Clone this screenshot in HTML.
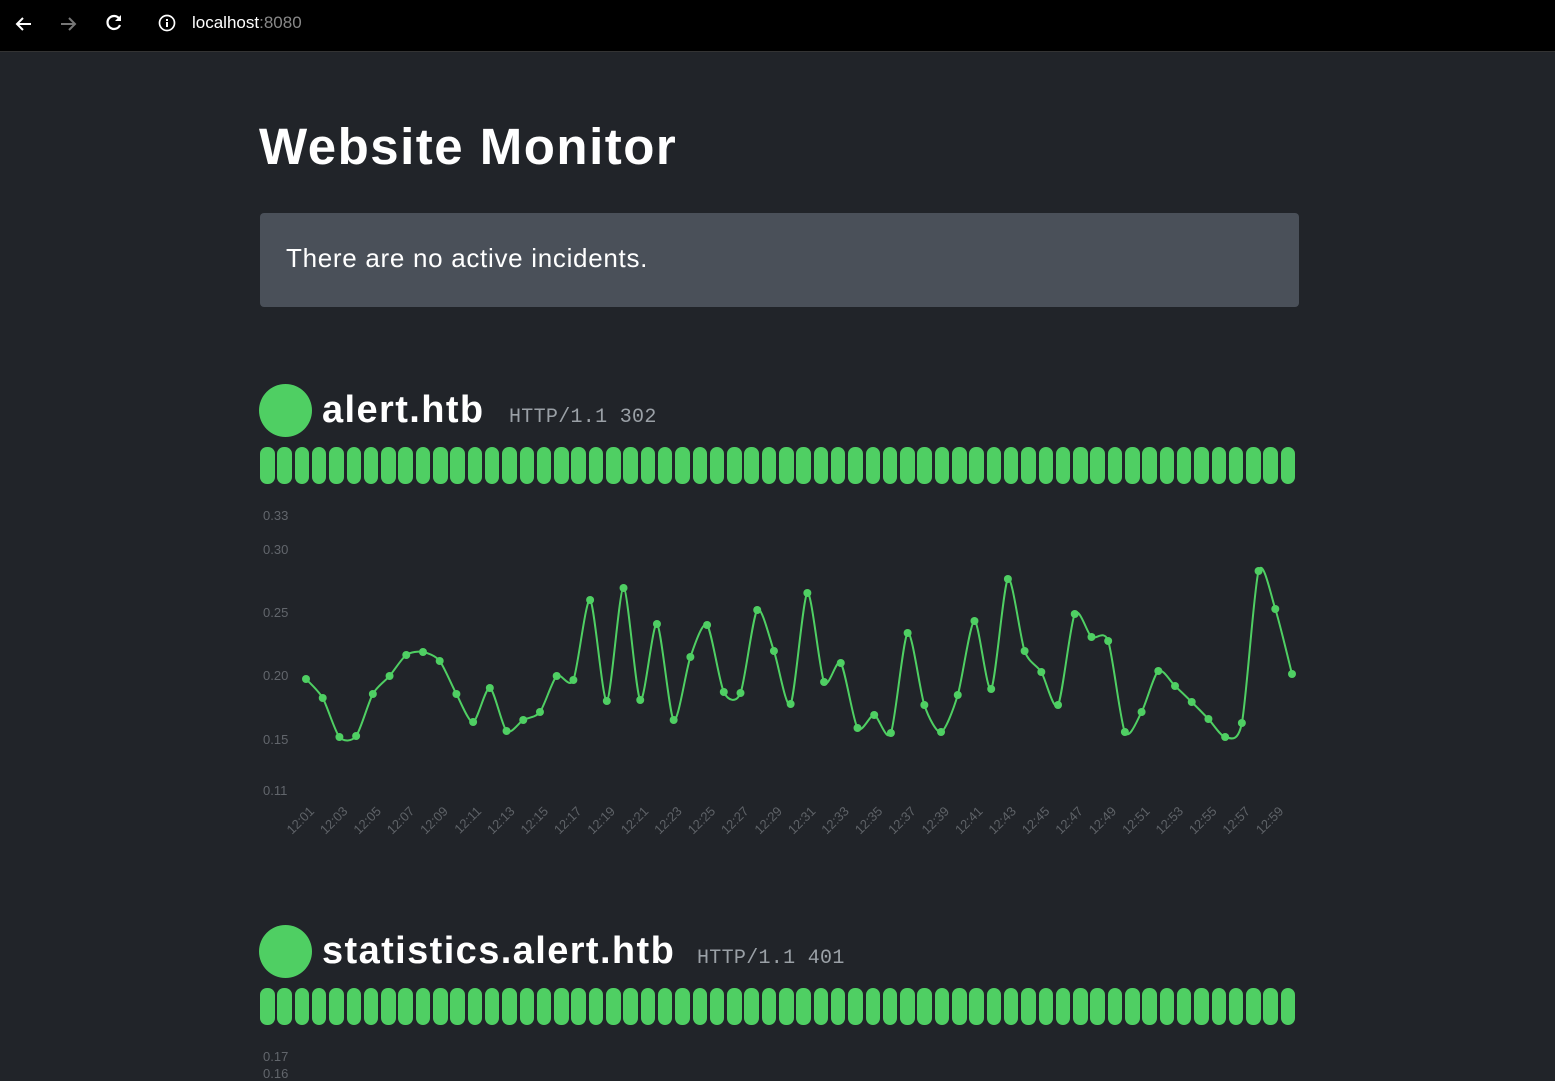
<!DOCTYPE html>
<html><head><meta charset="utf-8"><style>
*{margin:0;padding:0;box-sizing:border-box}
html,body{width:1555px;height:1076px;overflow:hidden;background:#212429;font-family:"Liberation Sans",sans-serif}
#bar{position:absolute;left:0;top:0;width:1555px;height:52px;background:#000;border-bottom:1px solid #333}
.abs{position:absolute}
h1{position:absolute;left:259px;top:117px;font-size:51px;font-weight:bold;color:#fff;letter-spacing:1.5px}
.box{position:absolute;left:260px;top:213px;width:1039px;height:94px;background:#4a5059;border-radius:4px;color:#fff;font-size:26px;padding:30px 0 0 26px;letter-spacing:0.7px}
.dot{position:absolute;width:53px;height:53px;border-radius:50%;background:#4fcf63;left:259px}
.name{position:absolute;left:322px;font-size:38px;font-weight:bold;color:#fff;letter-spacing:1.4px}
.code{position:absolute;font-family:"Liberation Mono",monospace;font-size:20px;color:#9aa0a6;letter-spacing:0.3px}
.ylab{position:absolute;left:263px;font-size:13px;color:#62666c}
</style></head><body>
<div id="bar">
<svg class="abs" style="left:12px;top:12px" width="24" height="24" viewBox="0 0 24 24"><path d="M19 12H5M11 6l-6 6 6 6" stroke="#fff" stroke-width="2" fill="none"/></svg>
<svg class="abs" style="left:56px;top:12px" width="24" height="24" viewBox="0 0 24 24"><path d="M5 12h14M13 6l6 6-6 6" stroke="#777" stroke-width="2" fill="none"/></svg>
<svg class="abs" style="left:102px;top:11px" width="24" height="24" viewBox="0 0 24 24"><path d="M17.5 8A6.5 6.5 0 1 0 18 14" stroke="#fff" stroke-width="2.2" fill="none"/><path d="M19 4v6h-6z" fill="#fff"/></svg>
<svg class="abs" style="left:156px;top:12px" width="22" height="22" viewBox="0 0 22 22"><circle cx="11" cy="11" r="7.5" stroke="#fff" stroke-width="1.7" fill="none"/><rect x="10" y="10" width="2" height="5" fill="#fff"/><rect x="10" y="7" width="2" height="2" fill="#fff"/></svg>
<div class="abs" style="left:192px;top:13px;font-size:17px;color:#fff">localhost<span style="color:#888">:8080</span></div>
</div>
<h1>Website Monitor</h1>
<div class="box">There are no active incidents.</div>

<div class="dot" style="top:384px"></div>
<div class="name" style="top:389px">alert.htb</div>
<div class="code" style="left:509px;top:406px">HTTP/1.1 302</div>
<div id="b1"></div>
<div class="ylab" style="top:508px">0.33</div>
<div class="ylab" style="top:542px">0.30</div>
<div class="ylab" style="top:605px">0.25</div>
<div class="ylab" style="top:668px">0.20</div>
<div class="ylab" style="top:732px">0.15</div>
<div class="ylab" style="top:783px">0.11</div>
<svg id="ch" class="abs" style="left:0;top:0" width="1555" height="1076"></svg>

<div class="dot" style="top:925px"></div>
<div class="name" style="top:930px">statistics.alert.htb</div>
<div class="code" style="left:697px;top:947px">HTTP/1.1 401</div>
<div id="b2"></div>
<div class="ylab" style="top:1049px">0.17</div>
<div class="ylab" style="top:1066px">0.16</div>
<script>
function bars(id,top){var h='';for(var i=0;i<60;i++){h+='<div style="position:absolute;left:'+(260+i*17.3).toFixed(1)+'px;top:'+top+'px;width:14.5px;height:37px;border-radius:7px;background:#4fcf63"></div>';}document.getElementById(id).innerHTML=h;}
bars('b1',447);bars('b2',988);
var ys=[679,698,737,736,694,676,655,652,661,694,722,688,731,720,712,676,680,600,701,588,700,624,720,657,625,692,693,610,651,704,593,682,663,728,715,733,633,705,732,695,621,689,579,651,672,705,614,637,641,732,712,671,686,702,719,737,723,571,609,674];
var p=ys.map(function(y,i){return [306+i*(986/59),y]});
var d='M'+p[0][0]+' '+p[0][1];
for(var i=0;i<p.length-1;i++){var p0=p[i-1]||p[i],p1=p[i],p2=p[i+1],p3=p[i+2]||p2,t=0.13;
d+=' C'+(p1[0]+(p2[0]-p0[0])*t)+' '+(p1[1]+(p2[1]-p0[1])*t)+' '+(p2[0]-(p3[0]-p1[0])*t)+' '+(p2[1]-(p3[1]-p1[1])*t)+' '+p2[0]+' '+p2[1];}
var s='<path d="'+d+'" stroke="#4fcf63" stroke-width="2" fill="none"/>';
p.forEach(function(q){s+='<circle cx="'+q[0]+'" cy="'+q[1]+'" r="4" fill="#4fcf63"/>'});
for(var k=0;k<30;k++){var x=315+k*2*(986/59),m=1+2*k;var t='12:'+(m<10?'0':'')+m;
s+='<text x="'+x+'" y="812" transform="rotate(-45 '+x+' 812)" text-anchor="end" font-family="Liberation Sans" font-size="13" fill="#5f6368">'+t+'</text>';}
document.getElementById('ch').innerHTML=s;
</script>
</body></html>
